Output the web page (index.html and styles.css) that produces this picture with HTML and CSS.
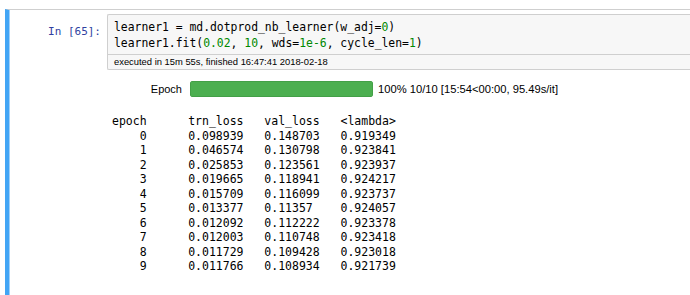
FILE: index.html
```html
<!DOCTYPE html>
<html lang="en">
<head>
    <meta charset="UTF-8">
    <title>learner1.fit</title>
    <link rel="stylesheet" href="styles.css">
</head>
<body>
    <div class="cell selected">
        <div class="input">
            <div class="prompt in-prompt">In&nbsp;[65]:</div>
            <div class="input-area">
                <pre class="code">learner1 = md.dotprod_nb_learner(w_adj=<span class="num">0</span>)
learner1.fit(<span class="num">0.02</span>, <span class="num">10</span>, wds=<span class="num">1e-6</span>, cycle_len=<span class="num">1</span>)</pre>
                <div class="timing">executed in 15m 55s, finished 16:47:41 2018-02-18</div>
            </div>
        </div>
        <div class="output">
            <div class="prompt"></div>
            <div class="output-area">
                <div class="progress-row">
                    <span class="progress-label">Epoch</span>
                    <div class="progress"><div class="progress-bar" style="width: 100%"></div></div>
                    <span class="progress-text">100% 10/10 [15:54&lt;00:00, 95.49s/it]</span>
                </div>
                <pre class="table">epoch      trn_loss   val_loss   &lt;lambda&gt;
    0      0.098939   0.148703   0.919349
    1      0.046574   0.130798   0.923841
    2      0.025853   0.123561   0.923937
    3      0.019665   0.118941   0.924217
    4      0.015709   0.116099   0.923737
    5      0.013377   0.11357    0.924057
    6      0.012092   0.112222   0.923378
    7      0.012003   0.110748   0.923418
    8      0.011729   0.109428   0.923018
    9      0.011766   0.108934   0.921739</pre>
            </div>
        </div>
    </div>
</body>
</html>
```

FILE: styles.css
```css
body {
    margin: 0;
    padding: 0;
    background: #fff;
    font-family: "Liberation Sans", Arial, sans-serif;
    overflow: hidden;
}

.cell {
    margin: 9px 0 0 5px;
    border-top: 1px solid #cfcfcf;
    height: calc(100vh - 10px);
}

.cell.selected {
    border-left: 4px solid #42a5f5;
    box-shadow: inset 1px 0 0 #9fd0fa;
}

.input,
.output {
    display: flex;
}

.prompt {
    width: 92px;
    flex: none;
    padding-right: 6px;
    text-align: right;
    font-family: "DejaVu Sans Mono", monospace;
    font-size: 11px;
}

.in-prompt {
    color: #303f9f;
    padding-top: 14px;
    line-height: 16px;
}

.input-area {
    margin-top: 4px;
    flex: 1;
    border: 1px solid #cfcfcf;
    border-right: none;
    border-radius: 2px 0 0 2px;
    background: #f7f7f7;
}

.code {
    margin: 0;
    padding: 4px 6px 3px;
    font-family: "DejaVu Sans Mono", monospace;
    font-size: 11.4px;
    line-height: 16px;
    color: #000;
}

.num {
    color: #080;
}

.timing {
    border-top: 1px solid #cfcfcf;
    height: 14px;
    line-height: 14px;
    padding-left: 6px;
    font-size: 9.4px;
    color: #000;
}

.output-area {
    flex: 1;
    padding-left: 5px;
}

.progress-row {
    display: flex;
    align-items: center;
    margin-top: 11px;
    height: 16px;
    font-size: 11px;
    color: #000;
}

.progress-label {
    width: 70px;
    text-align: right;
    margin-right: 8px;
}

.progress {
    width: 183px;
    height: 16px;
    box-sizing: border-box;
    border: 1px solid #43a047;
    border-radius: 2px;
    background: #eee;
}

.progress-bar {
    height: 100%;
    background: #4caf50;
}

.progress-text {
    margin-left: 5px;
    font-size: 11.2px;
}

.table {
    margin: 17px 0 0;
    font-family: "DejaVu Sans Mono", monospace;
    font-size: 11.5px;
    line-height: 14.5px;
    color: #000;
}
```
